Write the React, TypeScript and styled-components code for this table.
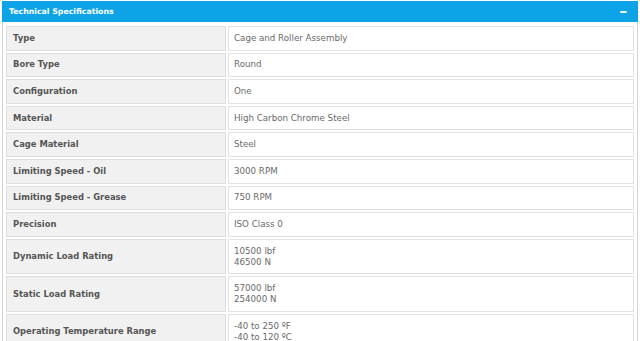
import React from "react";
import styled, { createGlobalStyle } from "styled-components";

const Global = createGlobalStyle`
  html, body { margin: 0; padding: 0; background: #ffffff; }
  body { width: 640px; overflow: hidden; font-family: "DejaVu Sans", Verdana, sans-serif; }
`;

const Panel = styled.section`
  margin: 1px 2px 0 2px;
`;

const Header = styled.div`
  display: flex;
  align-items: center;
  justify-content: space-between;
  height: 21px;
  padding: 0 11px 0 7px;
  background: #0ca4e6;
  color: #ffffff;
  font-size: 7.8px;
  font-weight: bold;
`;

const Collapse = styled.span`
  display: block;
  width: 7px;
  height: 2px;
  background: #e8f6fd;
  border-radius: 1px;
`;

const Body = styled.div`
  border: 1px solid #d6d6d6;
  border-top: none;
  padding: 2px 1px 0;
`;

const Table = styled.table`
  width: 100%;
  border-collapse: separate;
  border-spacing: 2px;
`;

const Label = styled.th`
  width: 206px;
  text-align: left;
  vertical-align: middle;
  padding: 5.8px 6px;
  font-size: 8.4px;
  line-height: 11px;
  font-weight: bold;
  color: #555555;
  background: #f1f1f1;
  border: 1px solid #dedede;
`;

const Value = styled.td`
  text-align: left;
  vertical-align: middle;
  padding: 5.8px 5px;
  font-size: 8.7px;
  line-height: 11px;
  color: #6a6a6a;
  background: #ffffff;
  border: 1px solid #e2e2e2;
`;

const specs: [string, string[]][] = [
  ["Type", ["Cage and Roller Assembly"]],
  ["Bore Type", ["Round"]],
  ["Configuration", ["One"]],
  ["Material", ["High Carbon Chrome Steel"]],
  ["Cage Material", ["Steel"]],
  ["Limiting Speed - Oil", ["3000 RPM"]],
  ["Limiting Speed - Grease", ["750 RPM"]],
  ["Precision", ["ISO Class 0"]],
  ["Dynamic Load Rating", ["10500 lbf", "46500 N"]],
  ["Static Load Rating", ["57000 lbf", "254000 N"]],
  ["Operating Temperature Range", ["-40 to 250 ºF", "-40 to 120 ºC"]],
];

export default function App() {
  return (
    <>
      <Global />
      <Panel>
        <Header>
          <span>Technical Specifications</span>
          <Collapse />
        </Header>
        <Body>
          <Table>
            <tbody>
              {specs.map(([k, v]) => (
                <tr key={k}>
                  <Label>{k}</Label>
                  <Value>
                    {v.map((line, i) => (
                      <React.Fragment key={i}>
                        {i > 0 && <br />}
                        {line}
                      </React.Fragment>
                    ))}
                  </Value>
                </tr>
              ))}
            </tbody>
          </Table>
        </Body>
      </Panel>
    </>
  );
}
